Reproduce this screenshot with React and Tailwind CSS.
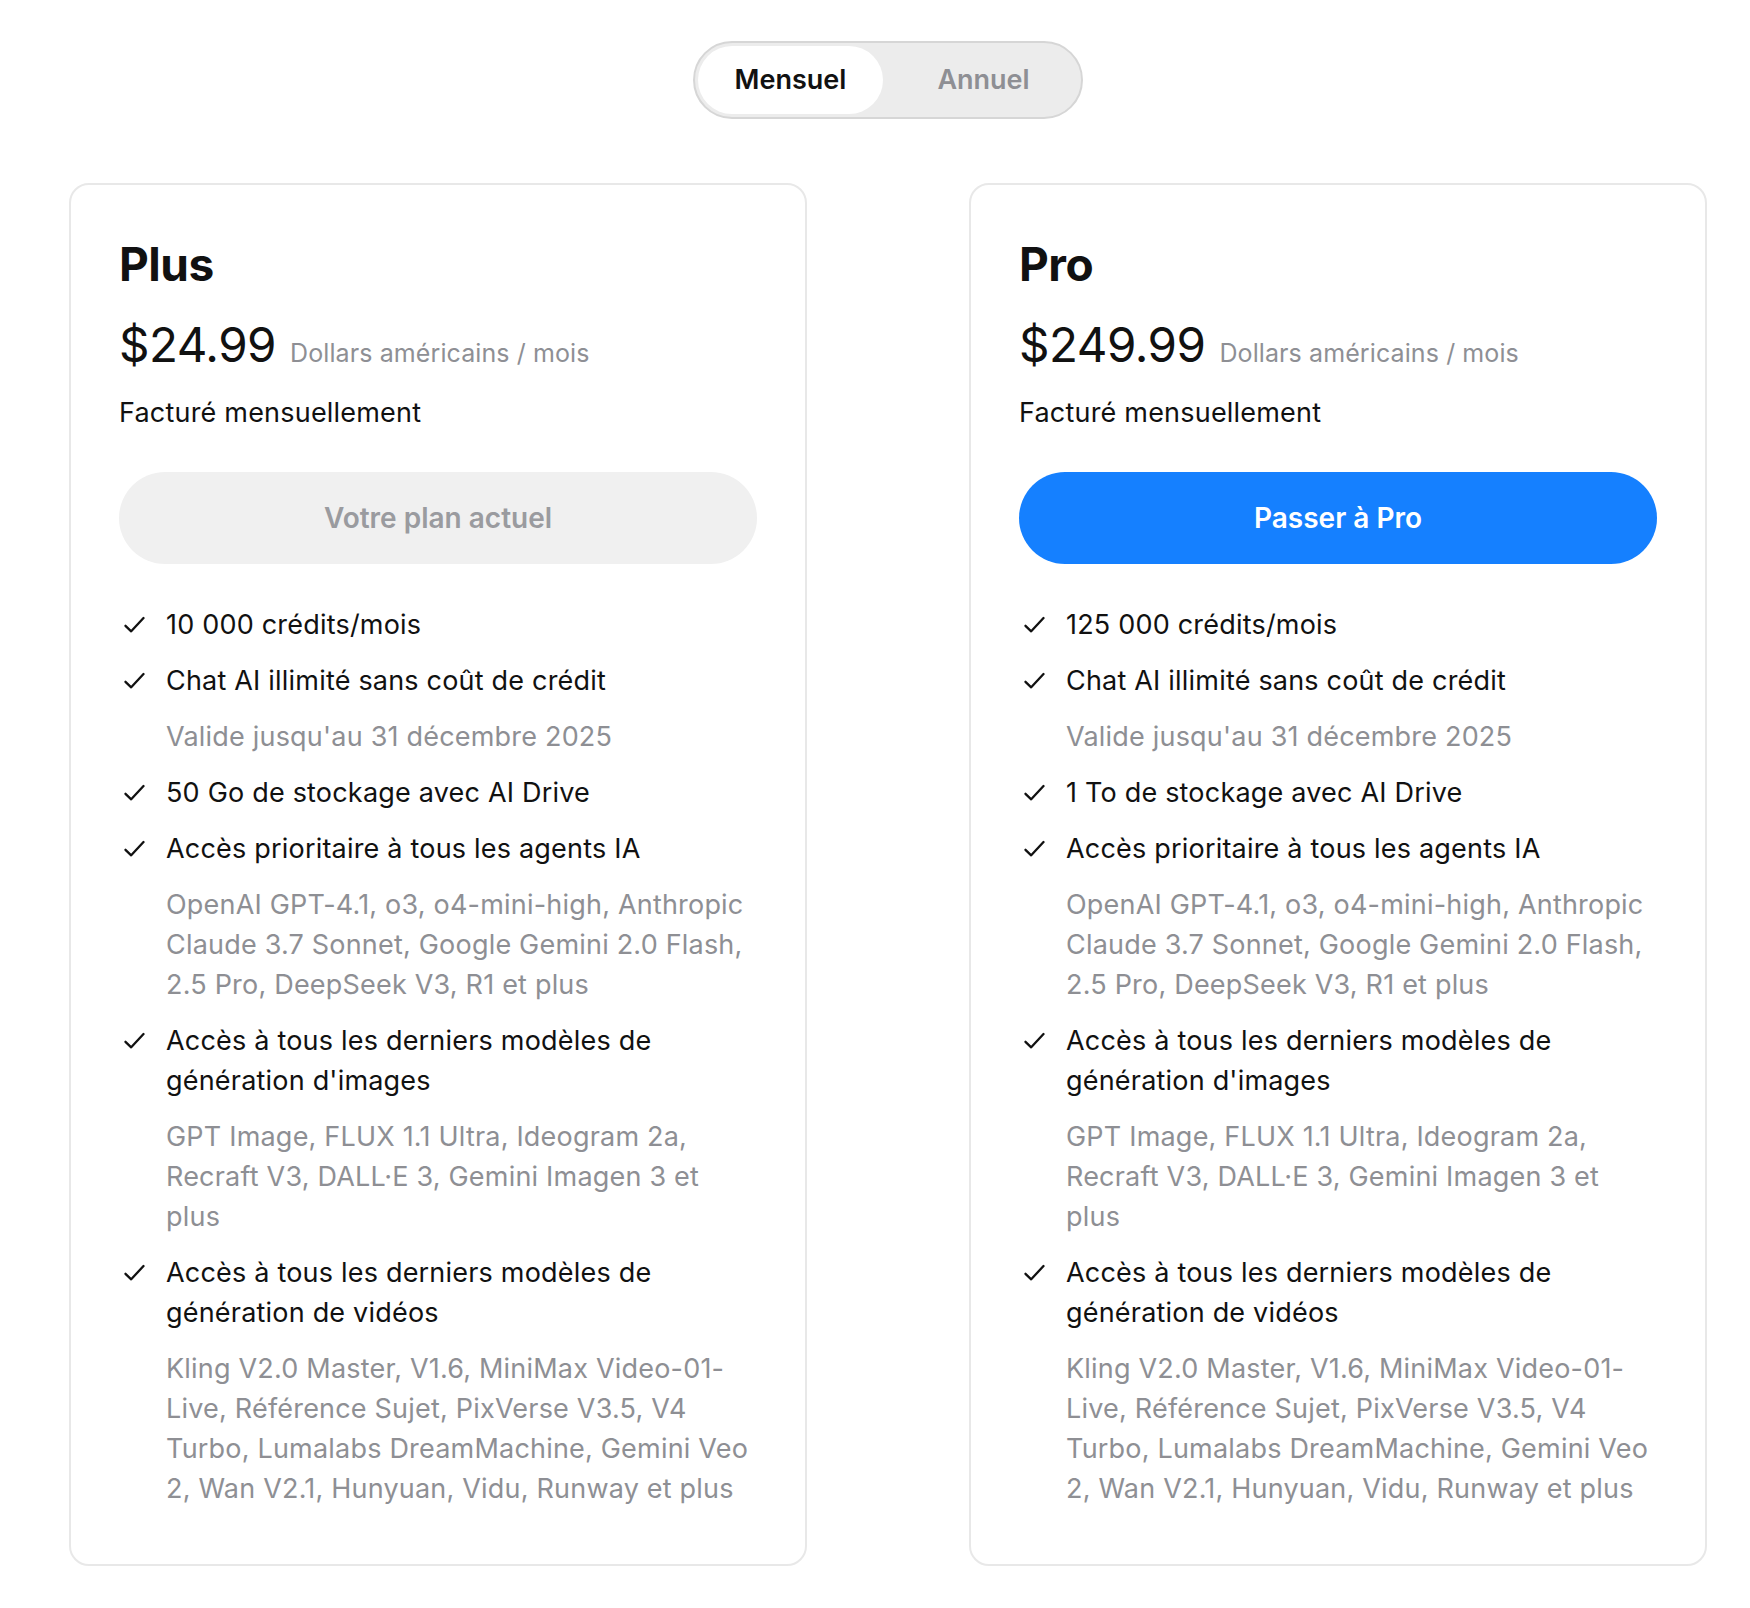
import { useState } from "react";

const plans = [
  {
    name: "Plus",
    price: "$24.99",
    current: true,
    credits: "10 000 crédits/mois",
    storage: "50 Go de stockage avec AI Drive",
  },
  {
    name: "Pro",
    price: "$249.99",
    current: false,
    credits: "125 000 crédits/mois",
    storage: "1 To de stockage avec AI Drive",
  },
];

function features(plan) {
  return [
    { text: plan.credits, check: true },
    { text: "Chat AI illimité sans coût de crédit", check: true },
    { text: "Valide jusqu'au 31 décembre 2025" },
    { text: plan.storage, check: true },
    { text: "Accès prioritaire à tous les agents IA", check: true },
    {
      text: "OpenAI GPT-4.1, o3, o4-mini-high, Anthropic Claude 3.7 Sonnet, Google Gemini 2.0 Flash, 2.5 Pro, DeepSeek V3, R1 et plus",
    },
    { text: "Accès à tous les derniers modèles de génération d'images", check: true },
    {
      text: "GPT Image, FLUX 1.1 Ultra, Ideogram 2a, Recraft V3, DALL·E 3, Gemini Imagen 3 et plus",
    },
    { text: "Accès à tous les derniers modèles de génération de vidéos", check: true },
    {
      text: "Kling V2.0 Master, V1.6, MiniMax Video-01-Live, Référence Sujet, PixVerse V3.5, V4 Turbo, Lumalabs DreamMachine, Gemini Veo 2, Wan V2.1, Hunyuan, Vidu, Runway et plus",
    },
  ];
}

function Check() {
  return (
    <svg width="21" height="18" viewBox="0 0 21 18" fill="none" className="ml-[5px]">
      <path
        d="M1.5 9.8 L7.2 15.3 L19.5 2"
        stroke="#111111"
        strokeWidth="2.3"
        strokeLinecap="round"
        strokeLinejoin="round"
      />
    </svg>
  );
}

function PlanCard({ plan }) {
  return (
    <div className="rounded-[20px] border-2 border-[#e8e8e8] bg-white px-[48px] pt-[53px] pb-[55px]">
      <h2 className="text-[46px] leading-[52px] font-bold text-[#111111] tracking-[-0.5px]">
        {plan.name}
      </h2>
      <div className="mt-[27px] flex items-baseline gap-[14px]">
        <span className="text-[47.5px] leading-[56px] text-[#111111] tracking-[-0.5px]">
          {plan.price}
        </span>
        <span className="text-[25px] tracking-[0.1px] text-[#8e8f94]">
          Dollars américains / mois
        </span>
      </div>
      <p className="mt-[20px] text-[27px] leading-[40px] tracking-[0.2px] text-[#111111]">
        Facturé mensuellement
      </p>
      {plan.current ? (
        <button className="mt-[39px] h-[92px] w-full rounded-full bg-[#f0f0f0] text-[28px] font-semibold text-[#9a9b9f]">
          Votre plan actuel
        </button>
      ) : (
        <button className="mt-[39px] h-[92px] w-full rounded-full bg-[#1580ff] text-[28px] font-semibold text-white">
          Passer à Pro
        </button>
      )}
      <ul className="mt-[41px] flex flex-col gap-[16px]">
        {features(plan).map((f, i) => (
          <li key={i} className="flex">
            <div className="flex h-[40px] w-[47px] shrink-0 items-center">
              {f.check && <Check />}
            </div>
            <span
              className={
                "text-[27px] leading-[40px] tracking-[0.2px] " +
                (f.check ? "text-[#111111]" : "text-[#8e8f94]")
              }
            >
              {f.text}
            </span>
          </li>
        ))}
      </ul>
    </div>
  );
}

export default function App() {
  const [period, setPeriod] = useState("month");

  return (
    <div
      className="min-h-screen bg-white pt-[41px] pb-[44px] pl-[69px] pr-[43px]"
      style={{ fontFamily: "Inter, 'Noto Sans', sans-serif" }}
    >
      <div className="flex justify-center">
        <div className="flex h-[78px] w-[390px] items-center rounded-full border-2 border-[#d6d6d6] bg-[#ececec] px-[3px]">
          <button
            onClick={() => setPeriod("month")}
            className={
              "h-[68px] w-[185px] rounded-full text-[27px] font-semibold " +
              (period === "month" ? "bg-white text-[#111111]" : "text-[#8e8f94]")
            }
          >
            Mensuel
          </button>
          <button
            onClick={() => setPeriod("year")}
            className={
              "h-[68px] w-[185px] rounded-full text-[27px] font-semibold ml-[8px] " +
              (period === "year" ? "bg-white text-[#111111]" : "text-[#8e8f94]")
            }
          >
            Annuel
          </button>
        </div>
      </div>
      <div className="mt-[64px] grid grid-cols-2 gap-[162px]">
        {plans.map((p) => (
          <PlanCard key={p.name} plan={p} />
        ))}
      </div>
    </div>
  );
}
